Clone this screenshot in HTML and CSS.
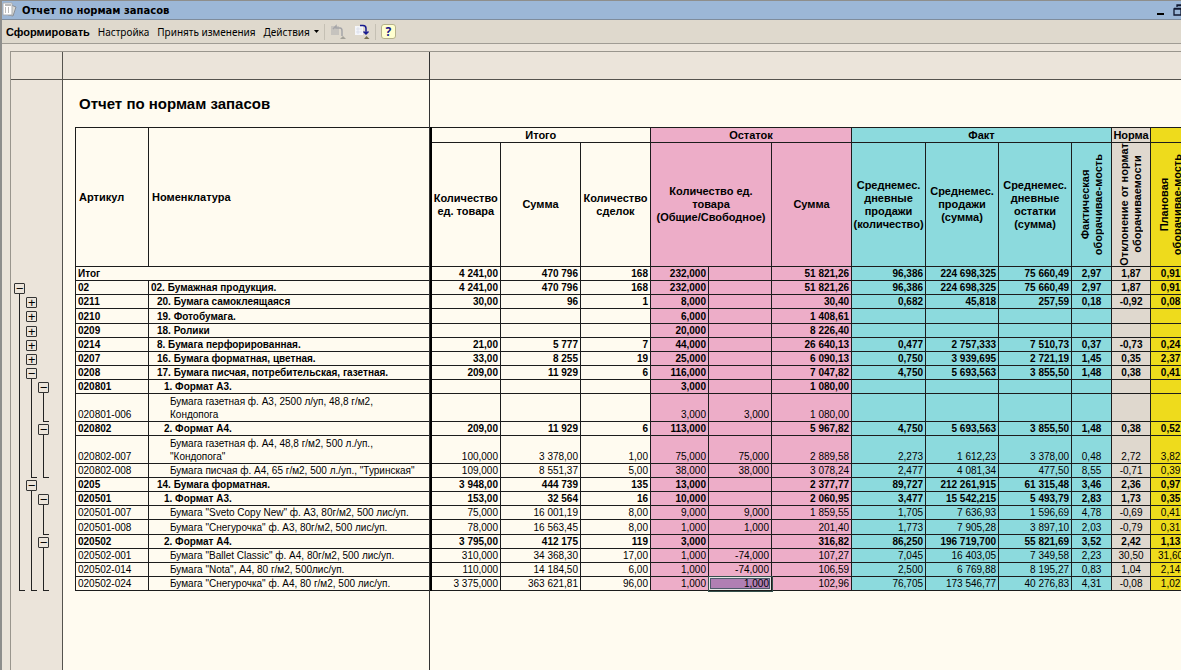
FILE: index.html
```html
<!DOCTYPE html>
<html lang="ru">
<head>
<meta charset="utf-8">
<title>Отчет по нормам запасов</title>
<link rel="stylesheet" href="styles.css">
</head>
<body>
<div class="window">
<header class="titlebar">
<svg class="app-icon" width="16" height="16" viewBox="0 0 16 16"><path d="M9 3l5 2-3 9-5-1z" fill="#d8d8d4" stroke="#8a8f96"/><path d="M1 1h9v12H1z" fill="#fff" stroke="#a8acb0"/><path d="M3 3h6M3 6h1M6 6h1M3 8h1M6 8h1M3 10h1M6 10h1" stroke="#777" stroke-width="1"/></svg>
<span class="window-title">Отчет по нормам запасов</span>
<button class="winbtn" aria-label="Свернуть"><svg width="10" height="12" viewBox="0 0 10 12"><path d="M1 10h7" stroke="#000" stroke-width="2"/></svg></button>
<button class="winbtn" aria-label="Восстановить"><svg width="12" height="12" viewBox="0 0 12 12"><path d="M1 5h7v6H1zM1 4.500h7M4 3V1h7v6H8M4 1.500h7" fill="none" stroke="#101830" stroke-width="1.300"/></svg></button>
</header>
<nav class="toolbar">
<button class="primary">Сформировать</button>
<button>Настройка</button>
<button>Принять изменения</button>
<button class="menu">Действия <svg width="5" height="3" viewBox="0 0 5 3"><path d="M0 0h5L2.500 3z" fill="#000"/></svg></button>
<span class="sep"></span>
<button class="icon" disabled aria-label="Восстановить настройки"><svg width="16" height="16" viewBox="0 0 16 16"><path d="M1 2h8v9H1z" fill="#c6c3be"/><path d="M3 5l3-3v2h4q2 0 2 3v5" fill="none" stroke="#a5a5a8" stroke-width="1.500"/><path d="M10 15l3-3 3 3z" fill="#a5a39a"/></svg></button>
<button class="icon" aria-label="Сохранить настройки"><svg width="16" height="16" viewBox="0 0 16 16"><path d="M1 2h8v9H1z" fill="#f5f6fa"/><path d="M2 5h6M2 8h6M4 3v7" stroke="#d5dae6" stroke-width=".7"/><path d="M6 1.500h3q3 0 3 3V9M9.500 7.500L12 10l2.500-2.500" fill="none" stroke="#171a90" stroke-width="1.500"/><path d="M10 15l2.500-3 3 3z" fill="#77704f"/></svg></button>
<span class="sep"></span>
<button class="help" aria-label="Справка">?</button>
</nav>
<main class="sheet">
<div class="corner"></div>
<div class="colhead"></div>
<div class="gutter">
<div class="g top"></div>
<div class="g"></div>
<div class="g"><i class="b"><button aria-label="Свернуть 02">−</button></i></div>
<div class="g"><i class="l"></i><i class="b p"><button aria-label="Развернуть 0211">+</button></i></div>
<div class="g tall"><i class="l"></i><i class="b p"><button aria-label="Развернуть 0210">+</button></i></div>
<div class="g"><i class="l"></i><i class="b p"><button aria-label="Развернуть 0209">+</button></i></div>
<div class="g"><i class="l"></i><i class="b p"><button aria-label="Развернуть 0214">+</button></i></div>
<div class="g"><i class="l"></i><i class="b p"><button aria-label="Развернуть 0207">+</button></i></div>
<div class="g"><i class="l"></i><i class="b"><button aria-label="Свернуть 0208">−</button></i></div>
<div class="g"><i class="l"></i><i class="l"></i><i class="b"><button aria-label="Свернуть 020801">−</button></i></div>
<div class="g double"><i class="l"></i><i class="l"></i><i class="e"></i></div>
<div class="g"><i class="l"></i><i class="l"></i><i class="b"><button aria-label="Свернуть 020802">−</button></i></div>
<div class="g double"><i class="l"></i><i class="l"></i><i class="l"></i></div>
<div class="g"><i class="l"></i><i class="e"></i><i class="e"></i></div>
<div class="g"><i class="l"></i><i class="b"><button aria-label="Свернуть 0205">−</button></i></div>
<div class="g"><i class="l"></i><i class="l"></i><i class="b"><button aria-label="Свернуть 020501">−</button></i></div>
<div class="g"><i class="l"></i><i class="l"></i><i class="l"></i></div>
<div class="g tall"><i class="l"></i><i class="l"></i><i class="e"></i></div>
<div class="g"><i class="l"></i><i class="l"></i><i class="b"><button aria-label="Свернуть 020502">−</button></i></div>
<div class="g"><i class="l"></i><i class="l"></i><i class="l"></i></div>
<div class="g"><i class="l"></i><i class="l"></i><i class="l"></i></div>
<div class="g"><i class="e"></i><i class="e"></i><i class="e"></i></div>
</div>
<div class="report">
<h1>Отчет по нормам запасов</h1>
<table>
<colgroup><col class="c73"><col class="c282"><col class="c70"><col class="c80"><col class="c70"><col class="c58"><col class="c63"><col class="c80"><col class="c74"><col class="c73"><col class="c73"><col class="c40"><col class="c39"><col class="c40"></colgroup>
<thead>
<tr class="groups"><th rowspan="2" class="left">Артикул</th><th rowspan="2" class="left">Номенклатура</th><th colspan="3" class="thick">Итого</th><th colspan="3" class="pink">Остаток</th><th colspan="4" class="cyan">Факт</th><th class="grey">Норма</th><th class="yellow"></th></tr>
<tr class="heads"><th class="thick">Количество ед. товара</th><th>Сумма</th><th>Количество сделок</th><th colspan="2" class="pink">Количество ед.<br>товара<br>(Общие/Свободное)</th><th class="pink">Сумма</th><th class="cyan">Среднемес. дневные продажи (количество)</th><th class="cyan">Среднемес. продажи (сумма)</th><th class="cyan">Среднемес. дневные остатки (сумма)</th><th class="cyan"><span class="vert">Фактическая<br>оборачивае-мость</span></th><th class="grey"><span class="vert">Отклонение от нормат<br>оборачиваемости</span></th><th class="yellow"><span class="vert">Плановая<br>оборачивае-мость</span></th></tr>
</thead>
<tbody>
<tr class="bold"><td colspan="2">Итог</td><td>4 241,00</td><td>470 796</td><td>168</td><td>232,000</td><td></td><td>51 821,26</td><td>96,386</td><td>224 698,325</td><td>75 660,49</td><td>2,97</td><td>1,87</td><td>0,91</td></tr>
<tr class="bold"><td>02</td><td>02. Бумажная продукция.</td><td>4 241,00</td><td>470 796</td><td>168</td><td>232,000</td><td></td><td>51 821,26</td><td>96,386</td><td>224 698,325</td><td>75 660,49</td><td>2,97</td><td>1,87</td><td>0,91</td></tr>
<tr class="bold"><td>0211</td><td class="l1">20. Бумага самоклеящаяся</td><td>30,00</td><td>96</td><td>1</td><td>8,000</td><td></td><td>30,40</td><td>0,682</td><td>45,818</td><td>257,59</td><td>0,18</td><td>-0,92</td><td>0,08</td></tr>
<tr class="bold tall"><td>0210</td><td class="l1">19. Фотобумага.</td><td></td><td></td><td></td><td>6,000</td><td></td><td>1 408,61</td><td></td><td></td><td></td><td></td><td></td><td></td></tr>
<tr class="bold"><td>0209</td><td class="l1">18. Ролики</td><td></td><td></td><td></td><td>20,000</td><td></td><td>8 226,40</td><td></td><td></td><td></td><td></td><td></td><td></td></tr>
<tr class="bold"><td>0214</td><td class="l1">8. Бумага перфорированная.</td><td>21,00</td><td>5 777</td><td>7</td><td>44,000</td><td></td><td>26 640,13</td><td>0,477</td><td>2 757,333</td><td>7 510,73</td><td>0,37</td><td>-0,73</td><td>0,24</td></tr>
<tr class="bold"><td>0207</td><td class="l1">16. Бумага форматная, цветная.</td><td>33,00</td><td>8 255</td><td>19</td><td>25,000</td><td></td><td>6 090,13</td><td>0,750</td><td>3 939,695</td><td>2 721,19</td><td>1,45</td><td>0,35</td><td>2,37</td></tr>
<tr class="bold"><td>0208</td><td class="l1">17. Бумага писчая, потребительская, газетная.</td><td>209,00</td><td>11 929</td><td>6</td><td>116,000</td><td></td><td>7 047,82</td><td>4,750</td><td>5 693,563</td><td>3 855,50</td><td>1,48</td><td>0,38</td><td>0,41</td></tr>
<tr class="bold"><td>020801</td><td class="l2">1. Формат А3.</td><td></td><td></td><td></td><td>3,000</td><td></td><td>1 080,00</td><td></td><td></td><td></td><td></td><td></td><td></td></tr>
<tr class="double"><td>020801-006</td><td class="l3">Бумага газетная ф. А3, 2500 л/уп, 48,8 г/м2,<br>Кондопога</td><td></td><td></td><td></td><td>3,000</td><td>3,000</td><td>1 080,00</td><td></td><td></td><td></td><td></td><td></td><td></td></tr>
<tr class="bold"><td>020802</td><td class="l2">2. Формат А4.</td><td>209,00</td><td>11 929</td><td>6</td><td>113,000</td><td></td><td>5 967,82</td><td>4,750</td><td>5 693,563</td><td>3 855,50</td><td>1,48</td><td>0,38</td><td>0,52</td></tr>
<tr class="double"><td>020802-007</td><td class="l3">Бумага газетная ф. А4, 48,8 г/м2, 500 л./уп.,<br>"Кондопога"</td><td>100,000</td><td>3 378,00</td><td>1,00</td><td>75,000</td><td>75,000</td><td>2 889,58</td><td>2,273</td><td>1 612,23</td><td>3 378,00</td><td>0,48</td><td>2,72</td><td>3,82</td></tr>
<tr><td>020802-008</td><td class="l3">Бумага писчая ф. А4, 65 г/м2, 500 л./уп., "Туринская"</td><td>109,000</td><td>8 551,37</td><td>5,00</td><td>38,000</td><td>38,000</td><td>3 078,24</td><td>2,477</td><td>4 081,34</td><td>477,50</td><td>8,55</td><td>-0,71</td><td>0,39</td></tr>
<tr class="bold"><td>0205</td><td class="l1">14. Бумага форматная.</td><td>3 948,00</td><td>444 739</td><td>135</td><td>13,000</td><td></td><td>2 377,77</td><td>89,727</td><td>212 261,915</td><td>61 315,48</td><td>3,46</td><td>2,36</td><td>0,97</td></tr>
<tr class="bold"><td>020501</td><td class="l2">1. Формат А3.</td><td>153,00</td><td>32 564</td><td>16</td><td>10,000</td><td></td><td>2 060,95</td><td>3,477</td><td>15 542,215</td><td>5 493,79</td><td>2,83</td><td>1,73</td><td>0,35</td></tr>
<tr><td>020501-007</td><td class="l3">Бумага "Sveto Copy New" ф. А3, 80г/м2, 500 лис/уп.</td><td>75,000</td><td>16 001,19</td><td>8,00</td><td>9,000</td><td>9,000</td><td>1 859,55</td><td>1,705</td><td>7 636,93</td><td>1 596,69</td><td>4,78</td><td>-0,69</td><td>0,41</td></tr>
<tr class="tall"><td>020501-008</td><td class="l3">Бумага "Снегурочка" ф. А3, 80г/м2, 500 лис/уп.</td><td>78,000</td><td>16 563,45</td><td>8,00</td><td>1,000</td><td>1,000</td><td>201,40</td><td>1,773</td><td>7 905,28</td><td>3 897,10</td><td>2,03</td><td>-0,79</td><td>0,31</td></tr>
<tr class="bold"><td>020502</td><td class="l2">2. Формат А4.</td><td>3 795,00</td><td>412 175</td><td>119</td><td>3,000</td><td></td><td>316,82</td><td>86,250</td><td>196 719,700</td><td>55 821,69</td><td>3,52</td><td>2,42</td><td>1,13</td></tr>
<tr><td>020502-001</td><td class="l3">Бумага "Ballet Classic" ф. А4, 80г/м2, 500 лис/уп.</td><td>310,000</td><td>34 368,30</td><td>17,00</td><td>1,000</td><td>-74,000</td><td>107,27</td><td>7,045</td><td>16 403,05</td><td>7 349,58</td><td>2,23</td><td>30,50</td><td>31,60</td></tr>
<tr><td>020502-014</td><td class="l3">Бумага "Nota", А4, 80 г/м2, 500лис/уп.</td><td>110,000</td><td>14 184,50</td><td>6,00</td><td>1,000</td><td>-74,000</td><td>106,59</td><td>2,500</td><td>6 769,88</td><td>8 195,27</td><td>0,83</td><td>1,04</td><td>2,14</td></tr>
<tr><td>020502-024</td><td class="l3">Бумага "Снегурочка" ф. А4, 80 г/м2, 500 лис/уп.</td><td>3 375,000</td><td>363 621,81</td><td>96,00</td><td>1,000</td><td class="selected">1,000</td><td>102,96</td><td>76,705</td><td>173 546,77</td><td>40 276,83</td><td>4,31</td><td>-0,08</td><td>1,02</td></tr>
</tbody>
</table>
</div>
</main>
</div>
</body>
</html>
```
FILE: styles.css
```css
* { box-sizing: border-box; }
body {
  margin: 0;
  overflow: hidden;
  font-family: "Liberation Sans", Arial, sans-serif;
  font-size: 11px;
  color: #000;
}
button {
  margin: 0;
  padding: 0;
  border: 0;
  background: none;
  font: inherit;
  color: inherit;
}
svg { display: block; }
.window {
  display: flex;
  flex-direction: column;
  height: 100vh;
  border-left: 2px solid #8e8e8c;
  border-top: 1px solid #8e8e8c;
  background: #ebe4da;
}
.titlebar {
  display: flex;
  align-items: center;
  height: 19px;
  flex: none;
  margin-right: -8px;
  background: #9cb7d7;
  border-bottom: 1px solid #7f8c9c;
}
.window-title {
  flex: 1;
  margin-left: 4px;
  font-family: "DejaVu Sans", sans-serif;
  font-size: 10px;
  font-weight: bold;
}
.winbtn { width: 17px; padding-left: 1px; }
.toolbar {
  display: flex;
  align-items: center;
  gap: 8px;
  height: 24px;
  flex: none;
  padding-left: 4px;
  background: #dfd9cd;
  border-bottom: 1px solid #a09c94;
  font-family: "Noto Sans", sans-serif;
  font-size: 10px;
}
.toolbar .primary {
  font-family: "Liberation Sans", Arial, sans-serif;
  font-size: 11px;
  font-weight: bold;
}
.toolbar .menu { display: flex; align-items: center; gap: 4px; }
.toolbar .icon { width: 16px; }
.sep { width: 1px; height: 16px; background: #c5c0b4; margin: 0 -3px; }
.toolbar .help {
  width: 15px;
  height: 15px;
  border: 1px solid #b6b18c;
  border-radius: 3px;
  background: #ffffcf;
  color: #14148a;
  font-size: 12px;
  line-height: 13px;
  font-weight: bold;
}
.sheet {
  flex: 1;
  min-height: 0;
  margin: 7px 0 0 8px;
  display: grid;
  grid-template-columns: 52px minmax(0, 1fr);
  grid-template-rows: 28px minmax(0, 1fr);
  border-top: 1px solid #99958d;
  border-left: 1px solid #99958d;
  position: relative;
  overflow: hidden;
}
.sheet::after {
  content: "";
  position: absolute;
  left: 418px;
  top: 0;
  bottom: 0;
  width: 1px;
  background: #333;
}
.corner, .colhead { border-bottom: 1px solid #55534e; }
.corner, .gutter { border-right: 1px solid #55534e; }
.report { background: #fffbf0; overflow: hidden; padding-left: 12px; }
h1 {
  height: 47px;
  margin: 0;
  padding: 15px 0 0 4px;
  font-size: 15px;
  line-height: 18px;
}
table {
  table-layout: fixed;
  width: 1115px;
  border-collapse: collapse;
  font-size: 10px;
  line-height: 13px;
}
.c73 { width: 73px; }
.c282 { width: 282px; }
.c70 { width: 70px; }
.c80 { width: 80px; }
.c58 { width: 58px; }
.c63 { width: 63px; }
.c74 { width: 74px; }
.c40 { width: 40px; }
.c39 { width: 39px; }
th, td {
  padding: 0 2px;
  border: 1px solid #1c1c1c;
  white-space: nowrap;
  overflow: hidden;
}
th { font-size: 11px; padding: 0; }
th.left { text-align: left; padding-left: 3px; }
.groups { height: 15px; }
.heads { height: 124px; }
.heads th { white-space: normal; }
.thick, td:nth-last-child(12) { border-left: 2px solid #000; }
.vert {
  display: inline-block;
  writing-mode: vertical-rl;
  transform: rotate(180deg);
  line-height: 13px;
  white-space: nowrap;
  vertical-align: middle;
}
tbody tr, .g { height: 14px; }
tbody .tall, .g.tall { height: 15px; }
tbody .double, .g.double { height: 28px; }
td { text-align: right; vertical-align: bottom; }
td:first-child, td:nth-last-child(13) { text-align: left; }
.bold { font-weight: bold; }
td.l1 { padding-left: 8px; }
td.l2 { padding-left: 15px; }
td.l3 { padding-left: 21px; }
td:nth-last-child(-n+3) { text-align: center; }
.pink, td:nth-last-child(-n+9) { background: #edadc8; }
.cyan, td:nth-last-child(-n+6) { background: #8cdadd; }
.grey, td:nth-last-child(2) { background: #dfd8ce; }
.yellow, td:last-child { background: #eedb1c; }
td.selected {
  background: #b07fb3;
  outline: 1px solid #35504c;
  box-shadow: inset 0 0 0 1px #e6e6e6, inset 0 0 0 2px #4f5a6b;
}
.g { display: flex; padding-left: 3px; }
.g.top { height: 187px; }
.g i {
  display: flex;
  flex-direction: column;
  width: 12px;
}
.g .b { padding-top: 2px; }
.g .b::after, .g .l::after, .g .e::after {
  content: "";
  flex: 1;
  margin-left: 5px;
  border-left: 1px solid #222;
}
.g .p::after { border: 0; }
.g .e::after { width: 5px; border-bottom: 1px solid #222; }
.g button {
  width: 11px;
  height: 11px;
  flex: none;
  border: 1px solid #333;
  border-radius: 1px;
  font-size: 13px;
  line-height: 9px;
  text-align: center;
}
```
